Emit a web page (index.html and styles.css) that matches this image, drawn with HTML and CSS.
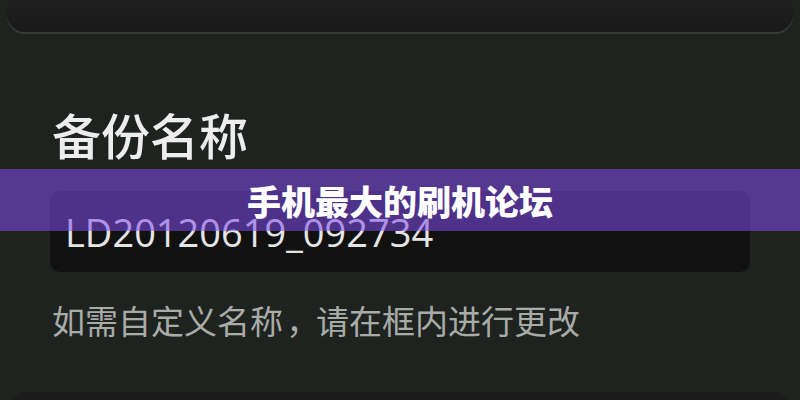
FILE: index.html
```html
<!DOCTYPE html>
<html lang="zh-CN">
<head>
<meta charset="utf-8">
<title>备份名称</title>
<link rel="stylesheet" href="styles.css">
</head>
<body>
<div class="screen">
  <div class="topcard"></div>
  <div class="content">
    <div class="title">备份名称</div>
    <div class="input">LD20120619_092734</div>
    <div class="hint">如需自定义名称<span class="comma">，</span>请在框内进行更改</div>
  </div>
  <div class="bottomcard"></div>
  <div class="banner">手机最大的刷机论坛</div>
</div>
</body>
</html>
```
FILE: styles.css
```css
html, body {
  margin: 0;
  padding: 0;
  background: #1f2320;
}
.screen {
  position: relative;
  width: 800px;
  height: 400px;
  overflow: hidden;
  background: #1f2320;
}
.topcard {
  height: 32px;
  margin: 0 7px;
  background: linear-gradient(#1f1f1f, #1a1a1a);
  border-radius: 0 0 18px 18px;
  box-shadow: 0 2px 0 #383a38;
}
.content {
  padding: 0 50px;
}
.title {
  margin-top: 77px;
  padding-left: 2px;
  font-family: "Noto Sans CJK SC", sans-serif;
  font-weight: 500;
  font-size: 49px;
  line-height: 49px;
  color: #ededed;
}
.input {
  margin-top: 33px;
  height: 81px;
  box-sizing: border-box;
  padding-left: 15px;
  display: flex;
  align-items: center;
  background: #111111;
  border-radius: 10px;
  font-family: "Open Sans", sans-serif;
  font-size: 38px;
  color: #e4e4e4;
}
.hint {
  margin-top: 32px;
  padding-left: 2px;
  font-family: "Noto Sans CJK SC", sans-serif;
  font-size: 33px;
  line-height: 33px;
  color: #a9aba9;
}
.comma {
  display: inline-block;
  transform: translateX(0.1em);
}
.bottomcard {
  margin: 55px 10px 0;
  height: 30px;
  background: #1b1c1b;
  border-radius: 16px 16px 0 0;
}
.banner {
  position: absolute;
  top: 169px;
  left: 0;
  right: 0;
  height: 62px;
  display: flex;
  align-items: center;
  justify-content: center;
  background: rgba(129, 77, 237, 0.55);
  font-family: "Noto Sans CJK SC", sans-serif;
  font-weight: 900;
  font-size: 34px;
  color: #ffffff;
}
```
